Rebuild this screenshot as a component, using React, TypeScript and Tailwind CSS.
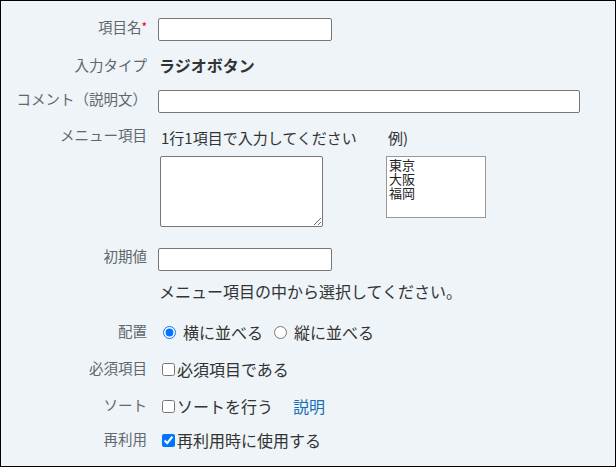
import React from "react";

const font = { fontFamily: '"Noto Sans CJK JP", "Noto Sans", sans-serif' };

function Label({ children, className = "" }: { children: React.ReactNode; className?: string }) {
  return (
    <div className={`w-[146px] shrink-0 text-right text-[14.5px] leading-[18px] text-[#61676d] ${className}`}>
      {children}
    </div>
  );
}

export default function App() {
  return (
    <div
      style={font}
      className="w-[616px] h-[467px] box-border border border-black bg-[#eef4f7] pt-[17px] text-[#333]"
    >
      {/* 項目名 */}
      <div className="flex items-start">
        <Label>
          項目名<span className="text-[#e00] text-[12px] align-top">*</span>
        </Label>
        <div className="ml-[11px]">
          <input className="block w-[174px] h-[23px] border border-[#767676] rounded-[2px] bg-white" />
        </div>
      </div>

      {/* 入力タイプ */}
      <div className="flex items-start mt-[14px]">
        <Label className="pt-[1px]">入力タイプ</Label>
        <div className="ml-[12px] text-[16px] leading-[20px] font-bold">ラジオボタン</div>
      </div>

      {/* コメント */}
      <div className="flex items-start mt-[15px]">
        <Label>コメント（説明文）</Label>
        <div className="ml-[11px]">
          <input className="block w-[422px] h-[23px] border border-[#767676] rounded-[2px] bg-white" />
        </div>
      </div>

      {/* メニュー項目 */}
      <div className="flex items-start mt-[13px]">
        <Label>メニュー項目</Label>
        <div className="ml-[13px] flex">
          <div className="w-[226px]">
            <div className="pt-[2px] pl-[1px] text-[15px] leading-[20px]">1行1項目で入力してください</div>
            <textarea className="block mt-[8px] w-[163px] h-[71px] border border-[#767676] rounded-[2px] bg-white resize" />
          </div>
          <div>
            <div className="pt-[2px] pl-[2px] text-[15px] leading-[20px]">例)</div>
            <div className="mt-[8px] w-[100px] h-[62px] border border-[#999] bg-white px-[2px] pt-[1px] text-[13px] leading-[14px] text-[#222]">
              東京
              <br />
              大阪
              <br />
              福岡
            </div>
          </div>
        </div>
      </div>

      {/* 初期値 */}
      <div className="flex items-start mt-[21px]">
        <Label className="-mt-[1px]">初期値</Label>
        <div className="ml-[11px]">
          <input className="block w-[174px] h-[23px] border border-[#767676] rounded-[2px] bg-white" />
          <div className="mt-[10px] pl-[1px] text-[16px] leading-[20px]">メニュー項目の中から選択してください。</div>
        </div>
      </div>

      {/* 配置 */}
      <div className="flex items-start mt-[21px]">
        <Label>配置</Label>
        <div className="ml-[11px] flex items-center text-[16px] leading-[20px]">
          <input type="radio" name="layout" defaultChecked className="ml-[5px] mr-[7px] w-[13px] h-[13px] accent-[#0075ff]" />
          <span>横に並べる</span>
          <input type="radio" name="layout" className="ml-[11px] mr-[7px] w-[13px] h-[13px] accent-[#0075ff]" />
          <span>縦に並べる</span>
        </div>
      </div>

      {/* 必須項目 */}
      <div className="flex items-start mt-[17px]">
        <Label>必須項目</Label>
        <div className="ml-[11px] flex items-center text-[16px] leading-[20px]">
          <input type="checkbox" className="ml-[4px] mr-[2px] w-[13px] h-[13px] accent-[#0075ff]" />
          <span>必須項目である</span>
        </div>
      </div>

      {/* ソート */}
      <div className="flex items-start mt-[17px]">
        <Label>ソート</Label>
        <div className="ml-[11px] flex items-center text-[16px] leading-[20px]">
          <input type="checkbox" className="ml-[4px] mr-[2px] w-[13px] h-[13px] accent-[#0075ff]" />
          <span>ソートを行う</span>
          <a className="ml-[20px] text-[#1a6eb5]">説明</a>
        </div>
      </div>

      {/* 再利用 */}
      <div className="flex items-start mt-[14px]">
        <Label>再利用</Label>
        <div className="ml-[11px] flex items-center text-[16px] leading-[20px]">
          <input type="checkbox" defaultChecked className="ml-[4px] mr-[2px] w-[13px] h-[13px] accent-[#0075ff]" />
          <span>再利用時に使用する</span>
        </div>
      </div>
    </div>
  );
}
